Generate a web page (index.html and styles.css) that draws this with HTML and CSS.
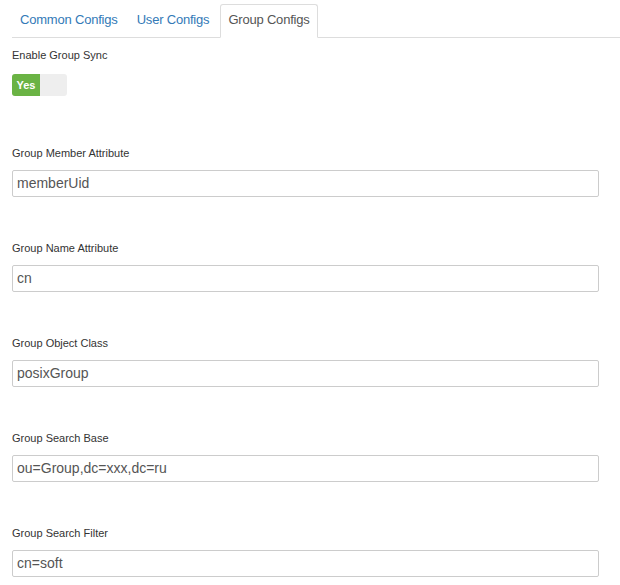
FILE: index.html
```html
<!DOCTYPE html>
<html>
<head>
<meta charset="utf-8">
<link rel="stylesheet" href="styles.css">
</head>
<body>
<div class="page">
  <ul class="tabs">
    <li class="tab">Common Configs</li>
    <li class="tab">User Configs</li>
    <li class="tab active">Group Configs</li>
  </ul>
  <div class="form">
    <div class="group toggle-group">
      <label class="label">Enable Group Sync</label>
      <div class="toggle"><span class="on">Yes</span><span class="off"></span></div>
    </div>
    <div class="group">
      <label class="label">Group Member Attribute</label>
      <div class="input">memberUid</div>
    </div>
    <div class="group">
      <label class="label">Group Name Attribute</label>
      <div class="input">cn</div>
    </div>
    <div class="group">
      <label class="label">Group Object Class</label>
      <div class="input">posixGroup</div>
    </div>
    <div class="group">
      <label class="label">Group Search Base</label>
      <div class="input">ou=Group,dc=xxx,dc=ru</div>
    </div>
    <div class="group">
      <label class="label">Group Search Filter</label>
      <div class="input">cn=soft</div>
    </div>
  </div>
</div>
</body>
</html>
```

FILE: styles.css
```css
html, body {
  margin: 0;
  padding: 0;
  background: #fff;
}
body {
  font-family: "Liberation Sans", Arial, sans-serif;
  color: #333;
}
.page {
  padding: 4px 0 0 12px;
}
.tabs {
  list-style: none;
  margin: 0;
  padding: 0;
  display: flex;
  border-bottom: 1px solid #ddd;
}
.tab {
  font-size: 13px;
  line-height: 20px;
  letter-spacing: -0.2px;
  padding: 5px 7px 7px;
  border: 1px solid transparent;
  margin: 0 3px -1px 0;
  color: #337ab7;
  border-radius: 3px 3px 0 0;
}
.tab.active {
  color: #555;
  background: #fff;
  border-color: #ddd;
  border-bottom-color: #fff;
}
.form {
  padding-top: 10px;
  width: 587px;
}
.group {
  margin-bottom: 44px;
}
.toggle-group {
  margin-bottom: 50px;
}
.label {
  display: block;
  font-size: 11px;
  line-height: 15px;
  color: #333;
  margin-bottom: 9px;
}
.toggle-group .label {
  margin-bottom: 11px;
}
.toggle {
  display: flex;
  width: 55px;
  height: 22px;
  border-radius: 3px;
  overflow: hidden;
  background: #eeeeee;
}
.toggle .on {
  width: 28px;
  background: #6ab344;
  color: #fff;
  font-size: 11px;
  font-weight: bold;
  line-height: 22px;
  text-align: center;
}
.toggle .off {
  flex: 1;
}
.input {
  box-sizing: border-box;
  height: 27px;
  border: 1px solid #ccc;
  border-radius: 2px;
  padding: 0 4px;
  font-size: 14px;
  line-height: 25px;
  color: #555;
}
```
